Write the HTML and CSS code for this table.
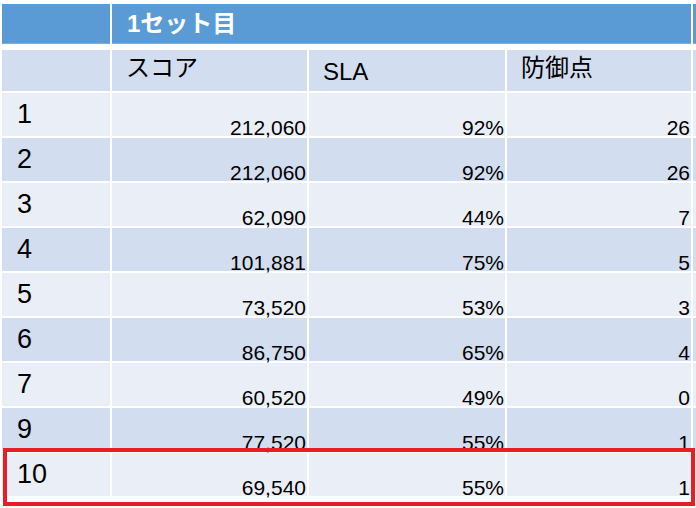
FILE: index.html
```html
<!DOCTYPE html>
<html lang="ja">
<head>
<meta charset="utf-8">
<title>1セット目</title>
<link rel="stylesheet" href="styles.css">
</head>
<body>
<div class="sheet">
  <div class="grid">
    <div class="cell title-cell"></div>
    <div class="cell title-cell title">1セット目</div>
    <div class="cell title-cell"></div>

    <div class="cell dark"></div>
    <div class="cell dark head head-jp">スコア</div>
    <div class="cell dark head">SLA</div>
    <div class="cell dark head head-jp">防御点</div>
    <div class="cell dark"></div>

    <div class="cell light num">1</div>
    <div class="cell light val">212,060</div>
    <div class="cell light val">92%</div>
    <div class="cell light val">26</div>
    <div class="cell light"></div>

    <div class="cell dark num">2</div>
    <div class="cell dark val">212,060</div>
    <div class="cell dark val">92%</div>
    <div class="cell dark val">26</div>
    <div class="cell dark"></div>

    <div class="cell light num">3</div>
    <div class="cell light val">62,090</div>
    <div class="cell light val">44%</div>
    <div class="cell light val">7</div>
    <div class="cell light"></div>

    <div class="cell dark num">4</div>
    <div class="cell dark val">101,881</div>
    <div class="cell dark val">75%</div>
    <div class="cell dark val">5</div>
    <div class="cell dark"></div>

    <div class="cell light num">5</div>
    <div class="cell light val">73,520</div>
    <div class="cell light val">53%</div>
    <div class="cell light val">3</div>
    <div class="cell light"></div>

    <div class="cell dark num">6</div>
    <div class="cell dark val">86,750</div>
    <div class="cell dark val">65%</div>
    <div class="cell dark val">4</div>
    <div class="cell dark"></div>

    <div class="cell light num">7</div>
    <div class="cell light val">60,520</div>
    <div class="cell light val">49%</div>
    <div class="cell light val">0</div>
    <div class="cell light"></div>

    <div class="cell dark num">9</div>
    <div class="cell dark val">77,520</div>
    <div class="cell dark val">55%</div>
    <div class="cell dark val">1</div>
    <div class="cell dark"></div>

    <div class="cell light num">10</div>
    <div class="cell light val">69,540</div>
    <div class="cell light val">55%</div>
    <div class="cell light val">1</div>
    <div class="cell light"></div>
  </div>
  <div class="highlight"></div>
</div>
</body>
</html>
```
FILE: styles.css
```css
html, body {
  margin: 0;
  padding: 0;
  background: #ffffff;
  overflow: hidden;
  width: 696px;
  height: 508px;
}

.sheet {
  position: relative;
  width: 696px;
  height: 508px;
  overflow: hidden;
  padding: 4px 0 0 2px;
  box-sizing: border-box;
  font-family: "Liberation Sans", "Noto Sans CJK JP", sans-serif;
  color: #000;
}

.grid {
  display: grid;
  grid-template-columns: 108px 195px 196px 184px 60px;
  grid-template-rows: 44px 41px repeat(9, 43px);
  column-gap: 2px;
  row-gap: 2px;
  width: 751px;
}

.cell {
  box-sizing: border-box;
  white-space: nowrap;
}

.title-cell {
  background: #5b9bd5;
  margin-bottom: 4px;
  box-shadow: inset 0 -1px 0 rgba(255, 255, 255, 0.18);
}

.title {
  grid-column: span 3;
  color: #ffffff;
  font-weight: bold;
  font-size: 24px;
  line-height: 24px;
  padding: 8px 0 0 15px;
}

.dark {
  background: #d2deef;
}

.light {
  background: #eaeff7;
}

.head {
  font-size: 24px;
  line-height: 24px;
  padding: 10px 0 0 14px;
}

.head-jp {
  padding-top: 6px;
}

.num {
  font-size: 27px;
  line-height: 27px;
  padding: 8px 0 0 15px;
}

.val {
  font-size: 21px;
  line-height: 21px;
  padding: 24px 1px 0 0;
  text-align: right;
}

.highlight {
  position: absolute;
  left: 3px;
  top: 448px;
  width: 692px;
  height: 58px;
  box-sizing: border-box;
  border: 4px solid #e51f27;
}
```
